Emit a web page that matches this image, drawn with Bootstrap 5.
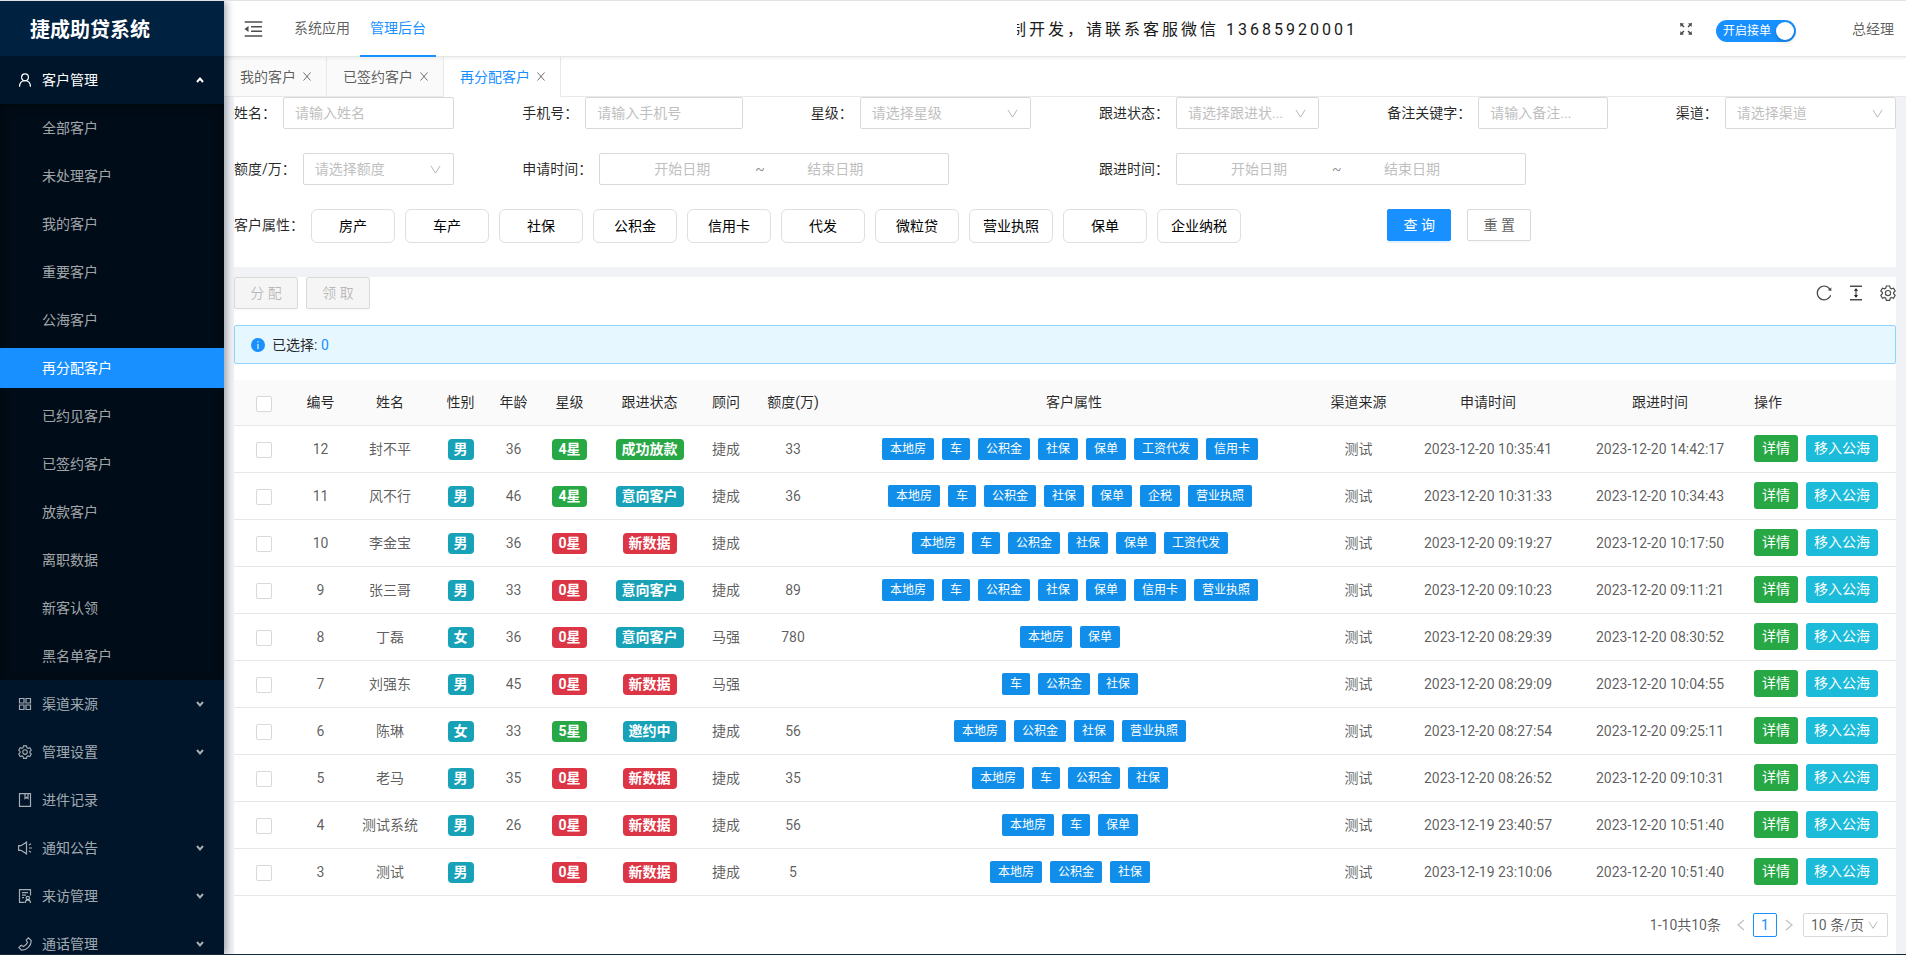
<!DOCTYPE html>
<html lang="zh-CN">
<head>
<meta charset="utf-8">
<meta name="viewport" content="width=device-width, initial-scale=1">
<title>捷成助贷系统</title>
<link href="https://cdn.jsdelivr.net/npm/bootstrap@5.3.0/dist/css/bootstrap.min.css" rel="stylesheet">
<style>
  :root { --blue: #1890ff; --line: #d9d9d9; --soft: #e8e8e8; --txt: rgba(0,0,0,.65); --dark: rgba(0,0,0,.85); }
  body { font-family: Roboto, "Noto Sans CJK SC", sans-serif; font-size: 14px; line-height: 22px; color: var(--txt); background: #f0f2f5; }
  a { text-decoration: none; color: inherit; }
  svg { display: block; flex: none; }
  .ico { width: 14px; height: 14px; fill: none; stroke: currentColor; stroke-width: 1.2; }
  .shell { height: 100vh; overflow: hidden; border-top: 1px solid #dfe3e6; border-bottom: 1px solid #13283a; }

  .side { width: 224px; flex: none; background: #001529; color: rgba(255,255,255,.65); box-shadow: 2px 0 8px rgba(0,21,41,.4); z-index: 3; overflow: hidden; }
  .brand { height: 55px; flex: none; padding: 3px 30px 0; background: #002140; color: #fff; font-size: 20px; font-weight: 700; }
  .group { height: 48px; padding: 0 20px 0 18px; gap: 10px; }
  .group.open { color: #fff; }
  .group .arrow { width: 8px; height: 8px; stroke-width: 2; margin-left: auto; }
  .sub { background: #000c17; box-shadow: inset 0 2px 8px rgba(0,0,0,.45); padding: 4px 0; }
  .sub a { display: block; line-height: 40px; padding-left: 42px; margin-bottom: 8px; }
  .sub a:last-child { margin-bottom: 0; }
  .sub a.on { background: var(--blue); color: #fff; }

  .topbar { height: 56px; background: #fff; border-bottom: 1px solid #e4e6e8; box-shadow: 0 1px 4px rgba(0,21,41,.08); padding: 0 12px 0 20px; z-index: 2; }
  .topnav { margin-left: 21px; }
  .topnav a { line-height: 54px; padding: 0 10px; height: 56px; border-bottom: 2px solid transparent; }
  .topnav a.on { color: var(--blue); border-color: var(--blue); }
  .notice { width: 341px; overflow: hidden; white-space: nowrap; font-size: 16px; letter-spacing: 3px; color: #1a1a1a; padding-top: 3px; margin-right: 321px; }
  .toggle { width: 80px; height: 22px; border: 0; border-radius: 11px; background: var(--blue); color: #fff; font-size: 12px; padding: 0 2px 0 7px; margin: 5px 56px 0 23px; }
  .knob { width: 18px; height: 18px; border-radius: 50%; background: #fff; box-shadow: 0 2px 4px rgba(0,35,11,.2); }

  .tabs { height: 40px; background: #fff; border-bottom: 1px solid var(--soft); }
  .tabs > div { height: 40px; padding: 0 15px 0 16px; gap: 7px; border-right: 1px solid var(--soft); border-bottom: 1px solid var(--soft); background: #fafafa; }
  .tabs > div.on { background: #fff; color: var(--blue); border-bottom-color: #fff; }
  .tabs button, .tools button, .pager button { border: 0; background: none; padding: 0; color: rgba(0,0,0,.55); }
  .tabs .ico { width: 8px; height: 9px; stroke-width: 1; }

  .main { padding: 0 10px; }
  .panel { background: #fff; }
  .filters { display: grid; grid-template-columns: repeat(6, 1fr); column-gap: 68px; row-gap: 24px; padding-bottom: 24px; margin-bottom: 10px; }
  .filters label, .filters .cap { color: var(--dark); margin-right: 7px; white-space: nowrap; line-height: 32px; }
  .wide2 { grid-column: span 2; }
  .wide4 { grid-column: span 4; }
  .filters .form-control, .filters .form-select, .range { height: 32px; flex: 1 1 0; min-width: 0; border: 1px solid var(--line); border-radius: 2px; font-size: 14px; line-height: 22px; padding: 4px 11px; background-color: #fff; color: #bfbfbf; }
  .form-select, .filters .form-select { background-image: url("data:image/svg+xml,%3Csvg xmlns='http://www.w3.org/2000/svg' viewBox='0 0 12 12'%3E%3Cpath fill='none' stroke='%23b0b0b0' d='M1 2l5 8 5-8'/%3E%3C/svg%3E"); background-size: 11px 11px; background-position: right 12px center; }
  .form-control::placeholder, .range input::placeholder { color: #bfbfbf; opacity: 1; }
  .range { flex: 0 0 350px; padding: 0 28px 0 9px; }
  .range input { border: 0; outline: 0; width: 146px; padding: 0; text-align: center; background: none; }
  .range span { width: 7px; text-align: center; color: rgba(0,0,0,.45); }
  .attrs { gap: 10px; }
  .attr { width: 84px; height: 34px; border: 1px solid #dcdfe3; border-radius: 6px; background: #fff; color: #000; padding: 0; white-space: nowrap; }
  .act { width: 64px; height: 32px; padding: 0; border: 1px solid var(--line); border-radius: 2px; font-size: 14px; color: var(--txt); background: #fff; box-shadow: 0 2px 0 rgba(0,0,0,.015); }
  .act.go { background: var(--blue); border-color: var(--blue); color: #fff; box-shadow: 0 2px 0 rgba(24,144,255,.12); }
  .act:disabled { background: #f5f5f5; border-color: var(--line); color: rgba(0,0,0,.25); opacity: 1; }

  .tools { gap: 16px; }
  .tools .ico { width: 16px; height: 16px; color: rgba(0,0,0,.7); }
  .topbar .ico { width: 14px; height: 14px; stroke: none; fill: #4d4d4d; }
  .note { height: 39px; margin: 16px 0; padding: 0 16px; gap: 7px; border: 1px solid #91d5ff; border-radius: 2px; background: #e6f7ff; color: var(--dark); }
  .note a { color: var(--blue); }
  .grid { table-layout: fixed; width: 100%; text-align: center; }
  .grid th { height: 45px; font-weight: 400; color: var(--dark); background: #fafafa; border-bottom: 1px solid var(--soft); padding: 0; white-space: nowrap; }
  .grid td { height: 47px; border-bottom: 1px solid var(--soft); padding: 0; white-space: nowrap; }
  .grid .ops { text-align: left; padding-left: 8px; }
  .grid .form-check-input { width: 16px; height: 16px; margin: 0; border: 1px solid var(--line); border-radius: 2px; vertical-align: middle; }
  .pill { display: inline-block; padding: 0 6px; line-height: 20px; height: 21px; border-radius: 4px; color: #fff; font-weight: 700; font-size: 14px; vertical-align: middle; }
  .c-teal { background: #17a2b8; } .c-green { background: #28a745; } .c-red { background: #dc3545; }
  .chip { display: inline-block; padding: 0 8px; height: 22px; line-height: 22px; margin-right: 8px; border-radius: 2px; background: #108ee9; color: #fff; font-size: 12px; vertical-align: middle; }
  .op { height: 27px; line-height: 27px; padding: 0 8px; border: 0; border-radius: 3px; color: #fff; font-size: 14px; vertical-align: middle; }
  .op.c-cyan { background: #1bbbd9; margin-left: 8px; }
  .pager { padding: 17px 8px; gap: 6px; }
  .pager .ico { width: 12px; height: 12px; color: #bfbfbf; }
  .pager .cur { width: 24px; height: 24px; border: 1px solid var(--blue); border-radius: 2px; color: var(--blue); }
  .pager .form-select { width: 85px; height: 24px; padding: 0 7px; margin-left: 2px; font-size: 14px; line-height: 22px; color: var(--txt); border: 1px solid var(--line); border-radius: 2px; background-position: right 9px center; background-size: 10px 10px; }
</style>
</head>
<body>
<svg width="0" height="0" class="position-absolute">
  <symbol id="up" viewBox="0 0 8 8"><path d="M1 6l3-3.500 3 3.500"/></symbol>
  <symbol id="down" viewBox="0 0 8 8"><path d="M1 2l3 3.500 3-3.500"/></symbol>
  <symbol id="x" viewBox="0 0 8 9"><path d="M.5.5l7 8M7.500.5l-7 8"/></symbol>
  <symbol id="user" viewBox="0 0 14 14"><circle cx="7" cy="4.300" r="3.400"/><path d="M1.500 13.700c.2-3.400 2.200-6 5.500-6s5.300 2.600 5.500 6"/></symbol>
  <symbol id="apps" viewBox="0 0 14 14"><path d="M1.500 1.500H6V6H1.500zM8 1.500h4.500V6H8zM1.500 8H6v4.500H1.500zM8 8h4.500v4.500H8z"/></symbol>
  <symbol id="gear" viewBox="0 0 16 16"><path d="M6.300 1h3.400l.5 2.100 1.200.7 2.100-.7 1.700 2.900-1.600 1.500v1.300l1.600 1.500-1.700 2.900-2.100-.7-1.200.7-.5 2.100H6.300l-.5-2.100-1.200-.7-2.100.7L.8 10.300l1.600-1.500V7.500L.8 6l1.700-2.900 2.100.7 1.200-.7z"/><circle cx="8" cy="8.100" r="2.600"/></symbol>
  <symbol id="book" viewBox="0 0 14 14"><path d="M1.500.6h11v12.800h-11zM7 .5v5l1.500-1.200L10 5.500v-5"/></symbol>
  <symbol id="horn" viewBox="0 0 14 14"><path d="M.6 4.700H3l5.500-3.500v11.600L3 9.300H.6zM11 7h3M11 4l2-1.200M11 10l2 1.200"/></symbol>
  <symbol id="audit" viewBox="0 0 14 14"><path d="M6.500 13.400h-5V.6h11v6M4 3.700h6M4 6.200h4M4 8.700h2"/><circle cx="9.800" cy="9" r="1.700"/><path d="M7.300 14c0-2 1-3.200 2.500-3.200s2.700 1.200 2.700 3.200"/></symbol>
  <symbol id="phone" viewBox="0 0 14 14"><path d="M10.500.8L13.200 3.500c.3 5-4.700 10-9.700 9.700L.8 10.500l2.400-2.300 2.300 1.300c1.700-.8 3.200-2.300 4-4L8.200 3.200z"/></symbol>
  <symbol id="left" viewBox="0 0 12 12"><path d="M9 1L3 6l6 5"/></symbol>
  <symbol id="right" viewBox="0 0 12 12"><path d="M3 1l6 5-6 5"/></symbol>
</svg>

<div class="shell d-flex">
  <aside class="side d-flex flex-column position-relative">
    <div class="brand d-flex align-items-center">捷成助贷系统</div>
    <nav>
      <a href="#" class="group open d-flex align-items-center"><svg class="ico"><use href="#user"/></svg>客户管理<svg class="ico arrow"><use href="#up"/></svg></a>
      <div class="sub">
        <a href="#">全部客户</a><a href="#">未处理客户</a><a href="#">我的客户</a><a href="#">重要客户</a><a href="#">公海客户</a><a href="#" class="on">再分配客户</a><a href="#">已约见客户</a><a href="#">已签约客户</a><a href="#">放款客户</a><a href="#">离职数据</a><a href="#">新客认领</a><a href="#">黑名单客户</a>
      </div>
      <a href="#" class="group d-flex align-items-center"><svg class="ico"><use href="#apps"/></svg>渠道来源<svg class="ico arrow"><use href="#down"/></svg></a>
      <a href="#" class="group d-flex align-items-center"><svg class="ico"><use href="#gear"/></svg>管理设置<svg class="ico arrow"><use href="#down"/></svg></a>
      <a href="#" class="group d-flex align-items-center"><svg class="ico"><use href="#book"/></svg>进件记录</a>
      <a href="#" class="group d-flex align-items-center"><svg class="ico"><use href="#horn"/></svg>通知公告<svg class="ico arrow"><use href="#down"/></svg></a>
      <a href="#" class="group d-flex align-items-center"><svg class="ico"><use href="#audit"/></svg>来访管理<svg class="ico arrow"><use href="#down"/></svg></a>
      <a href="#" class="group d-flex align-items-center"><svg class="ico"><use href="#phone"/></svg>通话管理<svg class="ico arrow"><use href="#down"/></svg></a>
    </nav>
  </aside>

  <div class="flex-grow-1 d-flex flex-column">
    <header class="topbar d-flex align-items-center position-relative">
      <svg width="19" height="20" viewBox="80 100 864 824" fill="#4d4d4d"><path d="M408 442h480c4 0 8-4 8-8v-56c0-4-4-8-8-8H408c-4 0-8 4-8 8v56c0 4 4 8 8 8zm-8 204c0 4 4 8 8 8h480c4 0 8-4 8-8v-56c0-4-4-8-8-8H408c-4 0-8 4-8 8v56zm504-486H120c-4 0-8 4-8 8v56c0 4 4 8 8 8h784c4 0 8-4 8-8v-56c0-4-4-8-8-8zm0 632H120c-4 0-8 4-8 8v56c0 4 4 8 8 8h784c4 0 8-4 8-8v-56c0-4-4-8-8-8zM115 519l157 123c6 5 14 1 14-7V389c0-7-8-12-14-7L115 505a9 9 0 0 0 0 14z"/></svg>
      <nav class="topnav d-flex"><a href="#">系统应用</a><a href="#" class="on">管理后台</a></nav>
      <div class="notice d-flex justify-content-end ms-auto"><span>制开发，请联系客服微信 13685920001</span></div>
      <svg class="ico" viewBox="0 0 14 14"><path d="M1 1l4 .5-1.200 1.200 1.700 1.700-1.100 1.100-1.700-1.700L1.500 5zM13 1l-4 .5 1.200 1.200-1.700 1.700 1.100 1.100 1.700-1.700L12.500 5zM1 13l4-.5-1.200-1.200 1.700-1.700-1.100-1.100-1.700 1.700L1.500 9zM13 13l-4-.5 1.200-1.200-1.700-1.700 1.100-1.100 1.700 1.700L12.500 9z"/></svg>
      <button type="button" role="switch" aria-checked="true" class="toggle d-flex align-items-center justify-content-between">开启接单<span class="knob"></span></button>
      <a href="#">总经理</a>
    </header>

    <div class="tabs d-flex">
      <div class="d-flex align-items-center"><a href="#">我的客户</a><button type="button" aria-label="关闭"><svg class="ico"><use href="#x"/></svg></button></div>
      <div class="d-flex align-items-center"><a href="#">已签约客户</a><button type="button" aria-label="关闭"><svg class="ico"><use href="#x"/></svg></button></div>
      <div class="on d-flex align-items-center"><a href="#">再分配客户</a><button type="button" aria-label="关闭"><svg class="ico"><use href="#x"/></svg></button></div>
    </div>

    <main class="main flex-grow-1 d-flex flex-column">
      <form class="panel filters">
        <div class="d-flex"><label for="f1">姓名：</label><input id="f1" class="form-control" placeholder="请输入姓名"></div>
        <div class="d-flex"><label for="f2">手机号：</label><input id="f2" class="form-control" placeholder="请输入手机号"></div>
        <div class="d-flex"><label for="f3">星级：</label><select id="f3" class="form-select"><option>请选择星级</option></select></div>
        <div class="d-flex"><label for="f4">跟进状态：</label><select id="f4" class="form-select"><option>请选择跟进状...</option></select></div>
        <div class="d-flex"><label for="f5">备注关键字：</label><input id="f5" class="form-control" placeholder="请输入备注..."></div>
        <div class="d-flex"><label for="f6">渠道：</label><select id="f6" class="form-select"><option>请选择渠道</option></select></div>
        <div class="d-flex"><label for="f7">额度/万：</label><select id="f7" class="form-select"><option>请选择额度</option></select></div>
        <div class="d-flex wide2"><label for="f8">申请时间：</label><div class="range d-flex align-items-center"><input id="f8" placeholder="开始日期"><span>~</span><input aria-label="申请结束日期" placeholder="结束日期"></div></div>
        <div class="d-flex wide2"><label for="f9">跟进时间：</label><div class="range d-flex align-items-center"><input id="f9" placeholder="开始日期"><span>~</span><input aria-label="跟进结束日期" placeholder="结束日期"></div></div>
        <div></div>
        <div class="d-flex wide4"><span class="cap">客户属性：</span>
          <div class="attrs d-flex">
            <button type="button" class="attr">房产</button><button type="button" class="attr">车产</button><button type="button" class="attr">社保</button><button type="button" class="attr">公积金</button><button type="button" class="attr">信用卡</button><button type="button" class="attr">代发</button><button type="button" class="attr">微粒贷</button><button type="button" class="attr">营业执照</button><button type="button" class="attr">保单</button><button type="button" class="attr">企业纳税</button>
          </div>
        </div>
        <div class="d-flex wide2 gap-3"><button type="button" class="act go">查 询</button><button type="button" class="act">重 置</button></div>
      </form>

      <section class="panel flex-grow-1">
        <div class="d-flex align-items-center">
          <div class="d-flex gap-2"><button type="button" class="act" disabled>分 配</button><button type="button" class="act" disabled>领 取</button></div>
          <div class="tools d-flex ms-auto">
            <button type="button" aria-label="刷新"><svg class="ico" viewBox="64 64 896 896" style="fill:currentColor;stroke:none"><path d="M909 209l-56 44C776 155 656 92 522 92 290 92 102 280 102 512c0 232 188 420 420 420 181 0 336-115 395-276 1-4-1-9-5-10l-57-20a8 8 0 0 0-10 5c-2 5-4 10-6 15-17 41-42 78-74 109A345 345 0 0 1 656 829c-42 18-87 27-134 27-46 0-91-9-134-27A342 342 0 0 1 279 755a342 342 0 0 1-74-109c-18-42-27-87-27-134s9-92 27-134c17-41 42-78 74-109 32-32 68-56 109-74 43-18 88-27 134-27 47 0 92 9 134 27a342 342 0 0 1 109 74c10 10 19 20 28 31l-60 47a8 8 0 0 0 3 14l176 43c5 1 10-3 10-8l1-181c0-7-8-10-14-6z"/></svg></button>
            <button type="button" aria-label="密度"><svg class="ico" viewBox="0 0 16 16"><path d="M2 1.200h12M2 14.800h12" stroke-width="1.500"/><path d="M8 4v8"/><path d="M5.800 6L8 3l2.200 3zM5.800 10L8 13l2.200-3z" fill="currentColor" stroke="none"/></svg></button>
            <button type="button" aria-label="列设置"><svg class="ico"><use href="#gear"/></svg></button>
          </div>
        </div>
        <div class="note d-flex align-items-center"><svg width="14" height="14" viewBox="0 0 14 14"><circle cx="7" cy="7" r="7" fill="#1890ff"/><path d="M7 6v5M7 3.200v1.400" stroke="#e6f7ff" stroke-width="1.200"/></svg><span>已选择: <a href="#">0</a></span></div>
        <table class="grid">
          <colgroup><col width="60"><col width="53"><col width="86"><col width="55"><col width="51"><col width="61"><col width="99"><col width="54"><col width="80"><col><col width="87"><col width="172"><col width="172"><col width="150"></colgroup>
          <thead><tr><th><input type="checkbox" class="form-check-input" aria-label="全选"></th><th>编号</th><th>姓名</th><th>性别</th><th>年龄</th><th>星级</th><th>跟进状态</th><th>顾问</th><th>额度(万)</th><th>客户属性</th><th>渠道来源</th><th>申请时间</th><th>跟进时间</th><th class="ops">操作</th></tr></thead>
          <tbody id="rows"></tbody>
        </table>
        <div class="pager d-flex align-items-center justify-content-end">
          <span class="me-2">1-10共10条</span>
          <button type="button" aria-label="上一页"><svg class="ico"><use href="#left"/></svg></button>
          <button type="button" class="cur">1</button>
          <button type="button" aria-label="下一页"><svg class="ico"><use href="#right"/></svg></button>
          <select class="form-select" aria-label="每页条数"><option>10 条/页</option></select>
        </div>
      </section>
    </main>
  </div>
</div>

<script>
  const data = [
    [12,'封不平','男',36,'4星','成功放款','捷成',33,'本地房 车 公积金 社保 保单 工资代发 信用卡','2023-12-20 10:35:41','2023-12-20 14:42:17'],
    [11,'风不行','男',46,'4星','意向客户','捷成',36,'本地房 车 公积金 社保 保单 企税 营业执照','2023-12-20 10:31:33','2023-12-20 10:34:43'],
    [10,'李金宝','男',36,'0星','新数据','捷成','','本地房 车 公积金 社保 保单 工资代发','2023-12-20 09:19:27','2023-12-20 10:17:50'],
    [9,'张三哥','男',33,'0星','意向客户','捷成',89,'本地房 车 公积金 社保 保单 信用卡 营业执照','2023-12-20 09:10:23','2023-12-20 09:11:21'],
    [8,'丁磊','女',36,'0星','意向客户','马强',780,'本地房 保单','2023-12-20 08:29:39','2023-12-20 08:30:52'],
    [7,'刘强东','男',45,'0星','新数据','马强','','车 公积金 社保','2023-12-20 08:29:09','2023-12-20 10:04:55'],
    [6,'陈琳','女',33,'5星','邀约中','捷成',56,'本地房 公积金 社保 营业执照','2023-12-20 08:27:54','2023-12-20 09:25:11'],
    [5,'老马','男',35,'0星','新数据','捷成',35,'本地房 车 公积金 社保','2023-12-20 08:26:52','2023-12-20 09:10:31'],
    [4,'测试系统','男',26,'0星','新数据','捷成',56,'本地房 车 保单','2023-12-19 23:40:57','2023-12-20 10:51:40'],
    [3,'测试','男','','0星','新数据','捷成',5,'本地房 公积金 社保','2023-12-19 23:10:06','2023-12-20 10:51:40']
  ];
  const tone = { '成功放款': 'green', '新数据': 'red' };
  const pill = (t, c) => `<span class="pill c-${c}">${t}</span>`;
  document.getElementById('rows').innerHTML = data.map(r => `<tr>
    <td><input type="checkbox" class="form-check-input" aria-label="选择 ${r[1]}"></td>
    <td>${r[0]}</td><td>${r[1]}</td><td>${pill(r[2], 'teal')}</td><td>${r[3]}</td>
    <td>${pill(r[4], r[4] === '0星' ? 'red' : 'green')}</td>
    <td>${pill(r[5], tone[r[5]] || 'teal')}</td>
    <td>${r[6]}</td><td>${r[7]}</td>
    <td>${r[8].split(' ').map(t => `<span class="chip">${t}</span>`).join('')}</td>
    <td>测试</td><td>${r[9]}</td><td>${r[10]}</td>
    <td class="ops"><button type="button" class="op c-green">详情</button><button type="button" class="op c-cyan">移入公海</button></td></tr>`).join('');
</script>
<script src="https://cdn.jsdelivr.net/npm/bootstrap@5.3.0/dist/js/bootstrap.bundle.min.js"></script>
</body>
</html>
